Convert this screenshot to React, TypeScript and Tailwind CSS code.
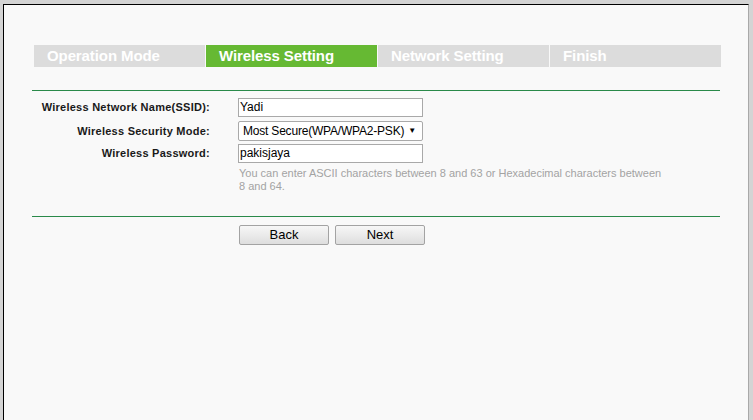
const STEPS = ["Operation Mode", "Wireless Setting", "Network Setting", "Finish"];
const ACTIVE = 1;

function Row({ label, children, className = "" }: { label: string; children: React.ReactNode; className?: string }) {
  return (
    <div className={`flex items-center ${className}`}>
      <div className="w-[178px] text-right text-[11px] font-bold tracking-[0.25px] text-[#1a1a1a]">{label}</div>
      <div className="ml-[28px]">{children}</div>
    </div>
  );
}

function Button({ children }: { children: React.ReactNode }) {
  return (
    <button className="w-[90px] h-[20px] border border-[#a3a3a3] rounded-[2px] bg-gradient-to-b from-[#f7f7f7] to-[#dedede] text-[13px] leading-[18px] text-black">
      {children}
    </button>
  );
}

export default function App() {
  return (
    <div className="w-[753px] h-[420px] overflow-hidden bg-[#d4d4d4] pt-[4px] pl-[3px] pr-[4px] font-['Liberation_Sans',Arial,sans-serif]">
      <div className="h-full border-t border-l border-r border-t-black border-l-black border-r-[#a9a9a9] bg-[#f9f9f9] pt-[40px]">
        {/* wizard steps */}
        <div className="ml-[30px] flex gap-[1px]">
          {STEPS.map((s, i) => (
            <div
              key={s}
              className={`w-[171px] h-[22px] pl-[13px] text-[15px] font-bold leading-[22px] tracking-[-0.1px] text-white ${
                i === ACTIVE ? "bg-[#66b933]" : "bg-[#dcdcdc]"
              }`}
            >
              {s}
            </div>
          ))}
        </div>

        <div className="ml-[28px] mt-[23px] w-[688px] h-px bg-[#2a8a4a]" />

        <div className="ml-[28px] mt-[7px]">
          <Row label="Wireless Network Name(SSID):">
            <div className="w-[185px] h-[19px] border border-[#a9a9a9] bg-white pl-[1px] text-[12px] leading-[17px] text-black">Yadi</div>
          </Row>
          <Row label="Wireless Security Mode:" className="mt-[4px]">
            <div className="w-[185px] h-[20px] border border-[#a9a9a9] rounded-[2px] bg-white pl-[4px] pr-[6px] flex items-center justify-between whitespace-nowrap text-[12px] tracking-[-0.2px] text-black">
              <span>Most Secure(WPA/WPA2-PSK)</span>
              <span className="flex-none text-[8px] leading-none">▼</span>
            </div>
          </Row>
          <Row label="Wireless Password:" className="mt-[3px]">
            <div className="w-[185px] h-[19px] border border-[#a9a9a9] bg-white pl-[1px] text-[12px] leading-[17px] text-black">pakisjaya</div>
          </Row>
          <div className="ml-[207px] mt-[4px] text-[11px] leading-[13px] text-[#a3a3a3]">
            You can enter ASCII characters between 8 and 63 or Hexadecimal characters between
            <br />
            8 and 64.
          </div>
        </div>

        <div className="ml-[28px] mt-[23px] w-[688px] h-px bg-[#2a8a4a]" />

        <div className="ml-[235px] mt-[8px] flex gap-[6px]">
          <Button>Back</Button>
          <Button>Next</Button>
        </div>
      </div>
    </div>
  );
}
